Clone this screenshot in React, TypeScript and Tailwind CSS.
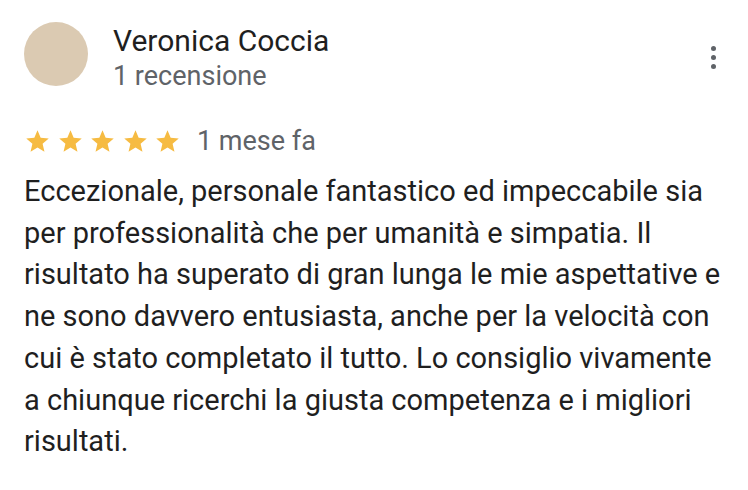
import React from "react";

const Star = () => (
  <svg width="27" height="27" viewBox="0 0 24 24" className="block">
    <path
      d="M12 17.27L18.18 21l-1.64-7.03L22 9.24l-7.19-.61L12 2 9.19 8.63 2 9.24l5.46 4.73L5.82 21z"
      fill="#f6bb42"
    />
  </svg>
);

const lines = [
  "Eccezionale, personale fantastico ed impeccabile sia",
  "per professionalità che per umanità e simpatia. Il",
  "risultato ha superato di gran lunga le mie aspettative e",
  "ne sono davvero entusiasta, anche per la velocità con",
  "cui è stato completato il tutto. Lo consiglio vivamente",
  "a chiunque ricerchi la giusta competenza e i migliori",
  "risultati.",
];

export default function App() {
  return (
    <div
      className="w-[748px] h-[490px] bg-white text-[#1f1f1f] overflow-hidden"
      style={{ fontFamily: "Roboto, 'Noto Sans', sans-serif" }}
    >
      <div className="flex items-start pt-[22px] pl-[24px] pr-[28px]">
        <div className="w-[64px] h-[64px] rounded-full bg-[#dbcab2] shrink-0" />
        <div className="ml-[25px] flex-1">
          <div className="text-[30px] leading-[38px] text-[#1f1f1f]">Veronica Coccia</div>
          <div className="text-[27px] leading-[32px] text-[#5f6368]">1 recensione</div>
        </div>
        <div className="flex flex-col items-center gap-[4px] mt-[24px] mr-[4px]">
          <span className="w-[5px] h-[5px] rounded-full bg-[#5f6368]" />
          <span className="w-[5px] h-[5px] rounded-full bg-[#5f6368]" />
          <span className="w-[5px] h-[5px] rounded-full bg-[#5f6368]" />
        </div>
      </div>
      <div className="flex items-center pl-[24px] mt-[33px]">
        <div className="flex gap-[5.5px]">
          <Star />
          <Star />
          <Star />
          <Star />
          <Star />
        </div>
        <span className="ml-[16px] text-[27px] leading-[32px] text-[#5f6368]">1 mese fa</span>
      </div>
      <div className="pl-[24px] mt-[14px] text-[29px] leading-[41.7px] text-[#1f1f1f] whitespace-nowrap">
        {lines.map((l, i) => (
          <div key={i}>{l}</div>
        ))}
      </div>
    </div>
  );
}
